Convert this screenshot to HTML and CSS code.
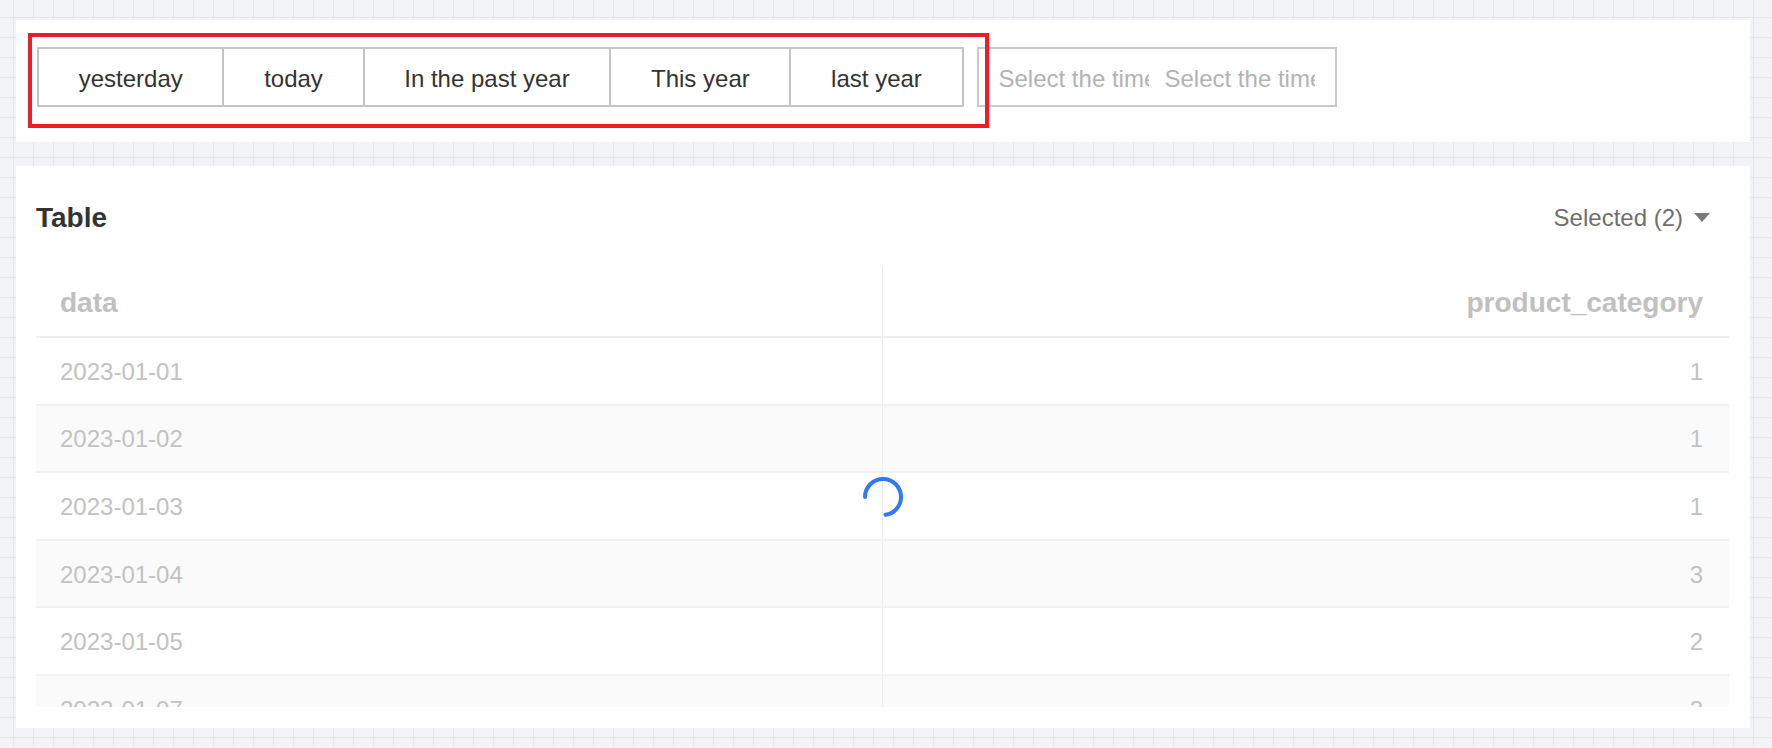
FILE: index.html
```html
<!DOCTYPE html>
<html lang="en">
<head>
<meta charset="utf-8">
<title>Table</title>
<link rel="stylesheet" href="styles.css">
</head>
<body>
<div class="page">
  <section class="panel toolbar">
    <div class="btn-group">
      <button class="btn">yesterday</button>
      <button class="btn">today</button>
      <button class="btn">In the past year</button>
      <button class="btn">This year</button>
      <button class="btn">last year</button>
    </div>
    <div class="date-range">
      <input class="date-input" type="text" placeholder="Select the time">
      <input class="date-input" type="text" placeholder="Select the time">
    </div>
    <div class="highlight"></div>
  </section>

  <section class="panel card">
    <div class="card-head">
      <h2 class="card-title">Table</h2>
      <div class="selector">
        <span class="selector-label">Selected (2)</span>
        <span class="caret"></span>
      </div>
    </div>
    <div class="table-wrap">
      <table class="data-table">
        <thead>
          <tr><th class="col-left">data</th><th class="col-right">product_category</th></tr>
        </thead>
        <tbody>
          <tr><td class="col-left">2023-01-01</td><td class="col-right">1</td></tr>
          <tr><td class="col-left">2023-01-02</td><td class="col-right">1</td></tr>
          <tr><td class="col-left">2023-01-03</td><td class="col-right">1</td></tr>
          <tr><td class="col-left">2023-01-04</td><td class="col-right">3</td></tr>
          <tr><td class="col-left">2023-01-05</td><td class="col-right">2</td></tr>
          <tr><td class="col-left">2023-01-07</td><td class="col-right">3</td></tr>
          <tr><td class="col-left">2023-01-08</td><td class="col-right">1</td></tr>
        </tbody>
      </table>
      <div class="spinner">
        <svg width="44" height="44" viewBox="0 0 44 44">
          <circle cx="22" cy="22" r="18" fill="none" stroke="#2f7bf6" stroke-width="4" stroke-linecap="round" stroke-dasharray="81.7 200" transform="rotate(180 22 22)"/>
        </svg>
      </div>
    </div>
  </section>
</div>
</body>
</html>
```

FILE: styles.css
```css
* { box-sizing: border-box; }

html, body {
  margin: 0;
  height: 100%;
}

body {
  font-family: "Liberation Sans", Arial, Helvetica, sans-serif;
  background-color: #f2f3f6;
  background-image:
    linear-gradient(to right, #e5e6ea 0, #e5e6ea 1px, transparent 1px),
    linear-gradient(to bottom, #e5e6ea 0, #e5e6ea 1px, transparent 1px);
  background-size: 20px 20px;
  background-position: 13px 17px;
}

.page {
  display: flex;
  flex-direction: column;
  gap: 24px;
  padding: 20px 22px 0 16px;
}

.panel {
  background: #ffffff;
}

/* toolbar */
.toolbar {
  position: relative;
  height: 122px;
  padding: 27px 21px;
  display: flex;
  align-items: flex-start;
}

.btn-group {
  display: flex;
}

.btn {
  height: 60px;
  margin: 0;
  padding: 3px 39.7px 0;
  border: 2px solid #c4c4c4;
  background: #ffffff;
  font-family: inherit;
  font-size: 24px;
  color: #333333;
  cursor: pointer;
}

.btn + .btn {
  margin-left: -2px;
}

.date-range {
  margin-left: 13px;
  width: 360px;
  height: 60px;
  border: 2px solid #c9c9c9;
  padding: 3px 20px 0;
  display: flex;
  align-items: center;
  gap: 16px;
}

.date-input {
  width: 150px;
  border: 0;
  padding: 0;
  outline: none;
  font-family: inherit;
  font-size: 24px;
  color: #333;
  background: transparent;
}

.date-input::placeholder {
  color: #b3b3b3;
}

.highlight {
  position: absolute;
  left: 12px;
  top: 13px;
  width: 961px;
  height: 95px;
  border: 4px solid #ee1c25;
  pointer-events: none;
}

/* card */
.card {
  height: 562px;
  padding: 30px 21px 21px 20px;
  display: flex;
  flex-direction: column;
}

.card-head {
  height: 40px;
  padding-top: 3px;
  display: flex;
  align-items: center;
  justify-content: space-between;
}

.card-title {
  margin: 0;
  font-size: 28px;
  font-weight: bold;
  color: #333333;
}

.selector {
  display: flex;
  align-items: center;
  margin-right: 19px;
  color: #6f6f6f;
  font-size: 24px;
}

.caret {
  margin-left: 11px;
  width: 0;
  height: 0;
  border-left: 8.5px solid transparent;
  border-right: 8.5px solid transparent;
  border-top: 9px solid #7a7a7a;
}

.table-wrap {
  position: relative;
  margin-top: 30px;
  height: 441px;
  overflow: hidden;
}

.data-table {
  width: 100%;
  border-collapse: collapse;
  table-layout: fixed;
}

.data-table th {
  height: 71px;
  padding: 4px 24px 0;
  font-size: 28px;
  font-weight: bold;
  color: #c0c0c0;
  border-bottom: 2px solid #efefef;
  vertical-align: middle;
}

.data-table td {
  height: 67.6px;
  padding: 2px 24px 0;
  font-size: 24px;
  color: #c2c2c2;
  border-bottom: 2px solid #f1f1f1;
  vertical-align: middle;
}

.data-table .col-left {
  text-align: left;
}

.data-table .col-right {
  text-align: right;
  padding-right: 26px;
  border-left: 1px solid #eeeeee;
}

.data-table tbody tr:nth-child(even) td {
  background: #fafafa;
}

.spinner {
  position: absolute;
  left: 50%;
  top: 231px;
  width: 44px;
  height: 44px;
  transform: translate(-50%, -50%);
}

.spinner svg {
  display: block;
}
```
